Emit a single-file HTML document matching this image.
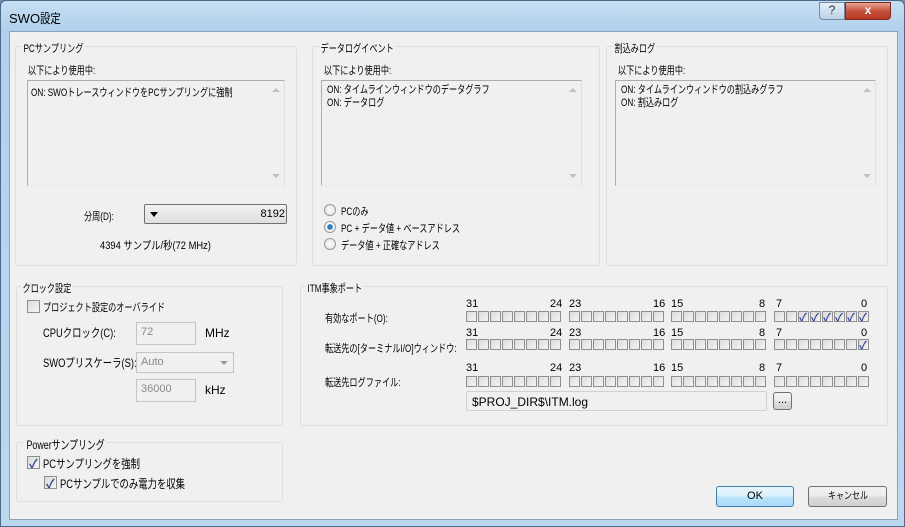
<!DOCTYPE html>
<html><head><meta charset="utf-8">
<style>
*{box-sizing:border-box;margin:0;padding:0}
body{width:905px;height:527px;overflow:hidden;background:#6d8fb0;font-family:"Liberation Sans","Noto Sans CJK JP",sans-serif;font-size:11px;color:#000;position:relative}
.win{position:absolute;left:0;top:0;width:905px;height:527px;border-radius:6px 6px 0 0;background:linear-gradient(#c6def2,#b0d0ec 30px,#bcd8ef);border:1px solid #4a6a8a}
.title{position:absolute;left:8px;top:7px;font-size:13px;color:#000}
.client{position:absolute;left:8px;top:30px;width:889px;height:489px;background:#f0f0f0;border:1px solid #8aa2bb}
.a{position:absolute;white-space:nowrap}
.j{transform:scaleX(0.74);transform-origin:0 0;display:inline-block;white-space:nowrap}
.grp{position:absolute;border:1px solid #d5dfe5;border-radius:3px}
.gt{position:absolute;background:#f0f0f0;padding:0 2px;top:-7px;left:6px;white-space:nowrap;transform:scaleX(0.74);transform-origin:0 0}
.lb{position:absolute;background:#f0f0f0;border:1px solid #abadb3;border-right-color:#dbdfe6;border-bottom-color:#e3e9ef;overflow:hidden}
.sb{position:absolute;right:0;top:0;bottom:0;width:17px;background:#f0f0f0}
.sb:before{content:"";position:absolute;left:5px;top:7px;border:4px solid transparent;border-bottom:4px solid #c0c0c0;border-top:0}
.sb:after{content:"";position:absolute;left:5px;bottom:7px;border:4px solid transparent;border-top:4px solid #c0c0c0;border-bottom:0}
.cb{position:absolute;width:11px;height:11px;border:1px solid #8f8f8f;background:linear-gradient(135deg,#dcdcdc,#f4f4f4)}
.cb.b{width:13px;height:13px}
.ck:after{content:"✓";position:absolute;left:0px;top:-3px;font-size:11px;color:#31469a;font-weight:bold}
.cb.b.ck:after{left:1px;top:-2px;font-size:12px}
.tx{position:absolute;border:1px solid #c5c5c5;background:#f0f0f0;color:#8a8a8a;padding:3px 4px}
.rd{position:absolute;width:12px;height:12px;border-radius:50%;border:1px solid #9a9a9a;background:radial-gradient(#fff,#ddd)}
.btn{position:absolute;border:1px solid #707070;border-radius:3px;background:linear-gradient(#f2f2f2,#ebebeb 50%,#dddddd 51%,#cfcfcf);text-align:center}
</style></head><body>
<div class="win">
<div class="title">SWO<span class="j" style="transform:scaleX(0.8)">設定</span></div>
<div style="position:absolute;left:818px;top:1px;width:26px;height:18px;border:1px solid #6e8aa6;border-radius:0 0 0 4px;background:linear-gradient(#e3eef8,#bcd3e8);text-align:center;font-size:12px;color:#333">?</div>
<div style="position:absolute;left:844px;top:1px;width:46px;height:18px;border:1px solid #7a2a20;border-radius:0 0 4px 0;background:linear-gradient(#e8a595,#c8503a 50%,#b53a22);text-align:center;color:#fff;font-weight:bold;font-size:12px">x</div>
<div class="client"></div>
</div>

<!-- PC sampling -->
<div class="grp" style="left:15px;top:46px;width:282px;height:220px"><span class="gt">PCサンプリング</span></div>
<div class="a j" style="left:28px;top:62px">以下により使用中:</div>
<div class="lb" style="left:27px;top:80px;width:258px;height:106px"><div class="a j" style="left:3px;top:3px">ON: SWOトレースウィンドウをPCサンプリングに強制</div><div class="sb"></div></div>
<div class="a j" style="left:84px;top:208px">分周(D):</div>
<div style="position:absolute;left:144px;top:204px;width:143px;height:20px;border:1px solid #707070;border-radius:2px;background:linear-gradient(#f2f2f2,#e0e0e0)"><div class="a" style="left:5px;top:7px;border:4px solid transparent;border-top:5px solid #000;border-bottom:0"></div><div class="a" style="right:1px;top:3px">8192</div></div>
<div class="a j" style="left:100px;top:237px;transform:scaleX(0.85)">4394 サンプル/秒(72 MHz)</div>

<!-- data log -->
<div class="grp" style="left:312px;top:46px;width:288px;height:220px"><span class="gt">データログイベント</span></div>
<div class="a j" style="left:324px;top:62px">以下により使用中:</div>
<div class="lb" style="left:321px;top:80px;width:261px;height:106px"><div class="a j" style="left:5px;top:3px;line-height:13px">ON: タイムラインウィンドウのデータグラフ<br>ON: データログ</div><div class="sb"></div></div>
<div class="rd" style="left:324px;top:204px"></div><div class="a j" style="left:341px;top:203px">PCのみ</div>
<div class="rd" style="left:324px;top:221px;background:radial-gradient(#2a80c8 35%,#fff 45%,#ddd)"></div><div class="a j" style="left:341px;top:220px">PC + データ値 + ベースアドレス</div>
<div class="rd" style="left:324px;top:238px"></div><div class="a j" style="left:341px;top:237px">データ値 + 正確なアドレス</div>

<!-- interrupt -->
<div class="grp" style="left:606px;top:46px;width:282px;height:220px"><span class="gt">割込みログ</span></div>
<div class="a j" style="left:618px;top:62px">以下により使用中:</div>
<div class="lb" style="left:615px;top:80px;width:261px;height:106px"><div class="a j" style="left:5px;top:3px;line-height:13px">ON: タイムラインウィンドウの割込みグラフ<br>ON: 割込みログ</div><div class="sb"></div></div>

<!-- clock -->
<div class="grp" style="left:16px;top:286px;width:267px;height:140px"><span class="gt" style="left:4px">クロック設定</span></div>
<div class="cb b" style="left:27px;top:300px"></div><div class="a j" style="left:43px;top:299px">プロジェクト設定のオーバライド</div>
<div class="a j" style="left:43px;top:324px;font-size:12px;transform:scaleX(0.78)">CPUクロック(C):</div>
<div class="tx" style="left:136px;top:322px;width:60px;height:23px">72</div>
<div class="a" style="left:205px;top:326px;font-size:12px">MHz</div>
<div class="a j" style="left:43px;top:354px;font-size:12px;transform:scaleX(0.78)">SWOプリスケーラ(S):</div>
<div class="tx" style="left:136px;top:352px;width:98px;height:21px">Auto<span style="position:absolute;right:5px;top:8px;border:4px solid transparent;border-top:4px solid #999;border-bottom:0"></span></div>
<div class="tx" style="left:136px;top:379px;width:60px;height:23px">36000</div>
<div class="a" style="left:205px;top:383px;font-size:12px">kHz</div>

<!-- power -->
<div class="grp" style="left:16px;top:442px;width:267px;height:60px"><span class="gt" style="left:8px;font-size:12px">Powerサンプリング</span></div>
<div class="cb b ck" style="left:27px;top:456px"></div><div class="a j" style="left:43px;top:455px;font-size:12px;transform:scaleX(0.78)">PCサンプリングを強制</div>
<div class="cb b ck" style="left:44px;top:476px"></div><div class="a j" style="left:60px;top:475px;font-size:12px;transform:scaleX(0.78)">PCサンプルでのみ電力を収集</div>

<!-- ITM -->
<div class="grp" style="left:300px;top:286px;width:588px;height:140px"><span class="gt" style="left:5px">ITM事象ポート</span></div>
<div class="a j" style="left:325px;top:310px">有効なポート(O):</div>
<div class="a j" style="left:325px;top:340px">転送先の[ターミナルI/O]ウィンドウ:</div>
<div class="a j" style="left:325px;top:374px">転送先ログファイル:</div>
<div class="a" style="left:466px;top:298px">31</div><div class="a" style="left:550px;top:298px">24</div><div class="a" style="left:569px;top:298px">23</div><div class="a" style="left:653px;top:298px">16</div><div class="a" style="left:671px;top:298px">15</div><div class="a" style="left:759px;top:298px">8</div><div class="a" style="left:776px;top:298px">7</div><div class="a" style="left:861px;top:298px">0</div>
<div class="a" style="left:466px;top:327px">31</div><div class="a" style="left:550px;top:327px">24</div><div class="a" style="left:569px;top:327px">23</div><div class="a" style="left:653px;top:327px">16</div><div class="a" style="left:671px;top:327px">15</div><div class="a" style="left:759px;top:327px">8</div><div class="a" style="left:776px;top:327px">7</div><div class="a" style="left:861px;top:327px">0</div>
<div class="a" style="left:466px;top:362px">31</div><div class="a" style="left:550px;top:362px">24</div><div class="a" style="left:569px;top:362px">23</div><div class="a" style="left:653px;top:362px">16</div><div class="a" style="left:671px;top:362px">15</div><div class="a" style="left:759px;top:362px">8</div><div class="a" style="left:776px;top:362px">7</div><div class="a" style="left:861px;top:362px">0</div>
<div id="boxes"></div>
<div style="position:absolute;left:466px;top:391px;width:301px;height:20px;border:1px solid #d0d0d0;border-radius:2px;background:#f0f0f0;padding:3px 5px;font-size:12px">$PROJ_DIR$\ITM.log</div>
<div class="btn" style="left:773px;top:392px;width:19px;height:18px;line-height:14px">...</div>

<div class="btn" style="left:716px;top:486px;width:78px;height:21px;border-color:#3c7fb1;background:linear-gradient(#eaf6fd,#d9f0fc 50%,#bee6fd 51%,#a7d9f5);line-height:19px">OK</div>
<div class="btn" style="left:808px;top:486px;width:79px;height:21px;line-height:19px;font-size:10px"><span class="j" style="transform:scaleX(0.8);transform-origin:50% 0">キャンセル</span></div>

<script>
var h='',gx=[466,569,671,774],ys=[311,339,376];
for(var r=0;r<3;r++)for(var g=0;g<4;g++)for(var i=0;i<8;i++){
var ck=(r==0&&g==3&&i>=2)||(r==1&&g==3&&i==7);
h+='<div class="cb'+(ck?' ck':'')+'" style="left:'+(gx[g]+i*12)+'px;top:'+ys[r]+'px"></div>';}
document.getElementById('boxes').innerHTML=h;
</script>
</body></html>
